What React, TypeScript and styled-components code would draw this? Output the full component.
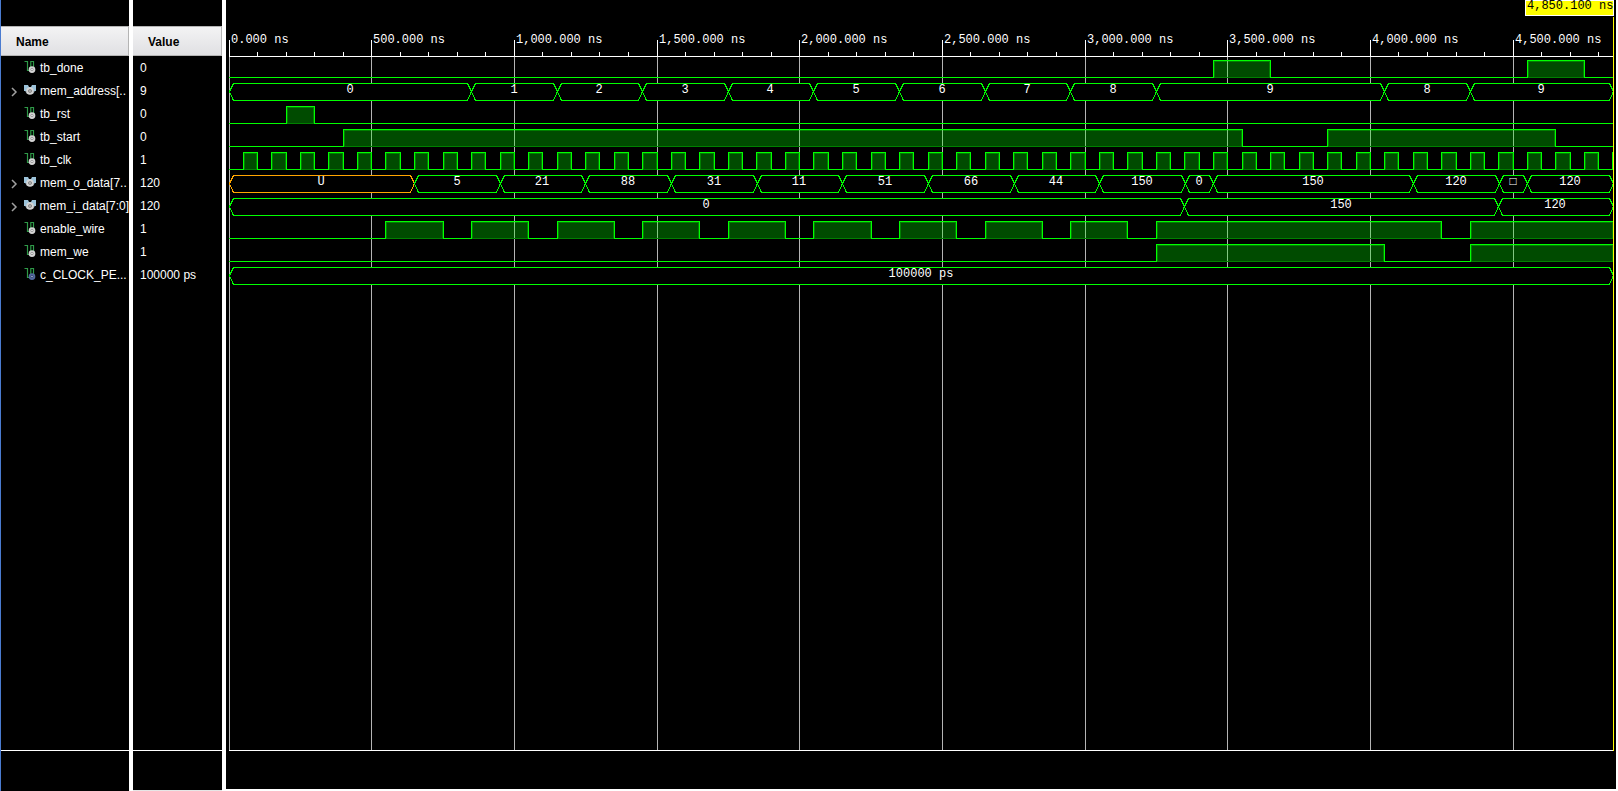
import React, { useLayoutEffect, useRef, useState } from "react";
import styled, { createGlobalStyle } from "styled-components";

const ROW = 23;
const END = 4850.1;
const GREEN = "#00ff00";

type Span = [number, number];
type BusPart = { until: number; text: string; unknown?: boolean };
type IconKind = "signal" | "bus" | "constant";
type Signal = {
  name: string;
  value: string;
  icon: IconKind;
  pulses?: Span[];
  bus?: BusPart[];
};

const steps = (texts: string[], first: number, step: number): BusPart[] =>
  texts.map((text, i) => ({ text, until: first + i * step }));

const pulseTrain = (count: number, first: number, period: number, high: number): Span[] =>
  Array.from({ length: count }, (_, i) => {
    const start = first + i * period;
    return [start, Math.min(start + high, END)];
  });

const signals: Signal[] = [
  { name: "tb_done", value: "0", icon: "signal", pulses: [[3450, 3650], [4550, 4750]] },
  {
    name: "mem_address[..", value: "9", icon: "bus",
    bus: [
      ...steps(["0", "1", "2", "3", "4", "5", "6", "7", "8"], 850, 300),
      { text: "9", until: 4050 }, { text: "8", until: 4350 }, { text: "9", until: END },
    ],
  },
  { name: "tb_rst", value: "0", icon: "signal", pulses: [[200, 300]] },
  { name: "tb_start", value: "0", icon: "signal", pulses: [[400, 3550], [3850, 4650]] },
  { name: "tb_clk", value: "1", icon: "signal", pulses: pulseTrain(49, 50, 100, 50) },
  {
    // The memory output settles 1 ns after the clock edge.
    name: "mem_o_data[7..", value: "120", icon: "bus",
    bus: [
      { text: "U", until: 651, unknown: true },
      ...steps(["5", "21", "88", "31", "11", "51", "66", "44", "150"], 951, 300),
      { text: "0", until: 3451 }, { text: "150", until: 4151 }, { text: "120", until: 4451 },
      { text: "□", until: 4551 }, { text: "120", until: END },
    ],
  },
  {
    name: "mem_i_data[7:0]", value: "120", icon: "bus",
    bus: [{ text: "0", until: 3350 }, { text: "150", until: 4450 }, { text: "120", until: END }],
  },
  {
    name: "enable_wire", value: "1", icon: "signal",
    pulses: [...pulseTrain(9, 550, 300, 200), [3250, 4250], [4350, END]],
  },
  { name: "mem_we", value: "1", icon: "signal", pulses: [[3250, 4050], [4350, END]] },
  { name: "c_CLOCK_PE...", value: "100000 ps", icon: "constant", bus: [{ text: "100000 ps", until: END }] },
];

const GlobalStyle = createGlobalStyle`
  body { margin: 0; background: #fff; }
  * { box-sizing: border-box; }
`;

const Viewer = styled.main`
  display: flex;
  gap: 4px;
  min-height: 100vh;
  border-left: 1px solid #4a7bd0;
  background: #fff;
  color: #fff;
  font: 12px/23px "Liberation Sans", Arial, sans-serif;
`;

const Column = styled.section<{ $width: number }>`
  display: flex;
  flex-direction: column;
  flex: none;
  width: ${(p) => p.$width}px;
  padding-top: 26px;
  background: #000;
  overflow: hidden;
`;

const Header = styled.h2`
  flex: none;
  height: 30px;
  margin: 0;
  padding-left: 15px;
  border: 1px solid #b4b4b4;
  border-width: 1px 1px 1px 0;
  background: linear-gradient(#f3f3f4, #e0e0e3);
  color: #000;
  font-size: 12px;
  line-height: 30px;
`;

const List = styled.ul`
  flex: 1;
  margin: 0;
  padding: 1px 0 0;
  list-style: none;
  border-bottom: 1px solid #fff;
`;

const Foot = styled.div<{ $edge?: boolean }>`
  flex: none;
  height: 40px;
  border-bottom: ${(p) => (p.$edge ? "1px solid #e6e6e6" : "0")};
`;

const NameRow = styled.li`
  display: flex;
  align-items: center;
  height: ${ROW}px;
  padding-left: 8px;
  white-space: nowrap;
`;

const ValueRow = styled.li`
  height: ${ROW}px;
  padding-left: 7px;
  white-space: nowrap;
`;

const Expander = styled.button`
  display: flex;
  align-items: center;
  width: 15px;
  height: 15px;
  padding: 0;
  border: 0;
  background: none;
`;

const Spacer = styled.span`
  width: 15px;
`;

const IconBox = styled.svg`
  flex: none;
  width: 12px;
  height: 15px;
  margin-right: 4px;
`;

const WavePanel = styled.section`
  flex: 1;
  min-width: 0;
  display: flex;
  margin: 0 2px 2px 0;
  background: #000;
`;

const Plot = styled.div`
  position: relative;
  flex: 1;
  min-width: 0;
`;

const Canvas = styled.svg`
  position: absolute;
  inset: 0;
  width: 100%;
  height: 100%;
  font: 12px "Liberation Mono", "Courier New", monospace;
  fill: #fff;
  shape-rendering: crispEdges;
`;

function SignalIcon({ kind }: { kind: IconKind }) {
  if (kind === "bus") {
    return (
      <IconBox viewBox="0 0 12 15" aria-hidden="true">
        <path d="M0 1h4l1 2h2l1-2h4v6H0z" fill="#9cc3da" />
        <path d="M1 7h10L9 10H3z" fill="#6f7f8a" />
        <circle cx="6" cy="7" r="2.800" fill="#666" stroke="#d4d4d4" strokeWidth="2" />
        <circle cx="6" cy="7" r="0.800" fill="#fff" />
      </IconBox>
    );
  }
  const constant = kind === "constant";
  return (
    <IconBox viewBox="0 0 12 15" aria-hidden="true">
      <path d="M0.500 0.500H3.500V9.500H6M6.800 8V0.500H9.500V7" fill="none" stroke="#2f9a48" strokeWidth="1.2" />
      <circle cx="8" cy="8.600" r="2.400" fill={constant ? "#25365f" : "#777"} stroke={constant ? "#52689c" : "#d4d4d4"} strokeWidth="1.900" />
      <circle cx="8" cy="8.600" r="0.800" fill={constant ? "#b8c4e0" : "#fff"} />
    </IconBox>
  );
}

function PulseWave({ spans, y, x }: { spans: Span[]; y: number; x: (t: number) => number }) {
  const high = y + 4;
  const low = y + 21;
  let line = `M${x(0)} ${low}.5`;
  spans.forEach(([a, b]) => {
    line += `H${x(a)}.5V${high}.5H${x(b)}.5`;
    if (b < END) line += `V${low}.5`;
  });
  if (spans[spans.length - 1][1] < END) line += `H${x(END)}`;
  return (
    <g>
      <path d={line} fill="none" stroke={GREEN} />
      {spans.map(([a, b]) => (
        <g key={a}>
          <rect x={x(a) + 1} y={high + 1} width={Math.max(0, x(b) - x(a) - 1)} height={17} fill="#008000" />
          <rect x={x(a) + 2} y={high + 2} width={Math.max(0, x(b) - x(a) - 3)} height={15} fill="#004b00" />
        </g>
      ))}
    </g>
  );
}

function BusWave({ parts, y, x }: { parts: BusPart[]; y: number; x: (t: number) => number }) {
  const top = y + 4;
  const low = y + 21;
  const mid = y + 12;
  return (
    <g>
      {parts.map((part, i) => {
        const a = x(i ? parts[i - 1].until : 0);
        const b = x(part.until);
        return (
          <g key={part.until}>
            <path
              d={`M${a}.5 ${mid}.5L${a + 4}.5 ${top}.5H${b - 4}.5L${b}.5 ${mid}.5L${b - 4}.5 ${low}.5H${a + 4}.5Z`}
              fill="#000"
              stroke={part.unknown ? "#ffa500" : GREEN}
            />
            <text
              x={Math.floor((a + b) / 2)}
              y={y + 14}
              textAnchor="middle"
              fontWeight={part.text === "□" ? 700 : 400}
            >
              {part.text}
            </text>
          </g>
        );
      })}
    </g>
  );
}

function Waveforms() {
  const ref = useRef<HTMLDivElement>(null);
  const [size, setSize] = useState({ width: 1390, height: 789 });
  useLayoutEffect(() => {
    const node = ref.current!;
    const measure = () => setSize({ width: node.clientWidth, height: node.clientHeight });
    measure();
    const observer = new ResizeObserver(measure);
    observer.observe(node);
    return () => observer.disconnect();
  }, []);

  const left = 3;
  const right = size.width - 3;
  const bottom = size.height - 39;
  const x = (t: number) => Math.floor(left + (t / END) * (right - left));
  const ticks = Array.from({ length: 49 }, (_, i) => i * 100);
  const majors = ticks.filter((t) => t % 500 === 0);

  return (
    <Plot ref={ref}>
      <Canvas role="img" aria-label="Simulation waveforms">
        {majors.map((t) => (
          <rect key={t} x={x(t)} y={57} width={1} height={bottom - 57} fill="#b4b4b4" />
        ))}
        {ticks.map((t) => {
          const y = t % 500 === 0 ? 40 : 52;
          return <rect key={t} x={x(t)} y={y} width={1} height={56 - y} />;
        })}
        {majors.map((t) => (
          <text key={t} x={x(t) + 2} y={43}>
            {t.toLocaleString("en-US", { minimumFractionDigits: 3 })} ns
          </text>
        ))}
        <rect x={left} y={56} width={right - left} height={1} />
        <rect x={left} y={bottom} width={right - left} height={1} />
        {signals.map((s, i) => {
          const y = 56 + i * ROW;
          return s.bus
            ? <BusWave key={s.name} parts={s.bus} y={y} x={x} />
            : <PulseWave key={s.name} spans={s.pulses!} y={y} x={x} />;
        })}
        {majors.slice(1).map((t) => (
          <g key={t}>
            {signals.map((s, i) =>
              s.pulses?.some(([a, b]) => a < t && t < b)
                ? <rect key={s.name} x={x(t)} y={61 + i * ROW} width={1} height={16} fill="#82c882" />
                : null,
            )}
          </g>
        ))}
        <rect x={right} y={17} width={1} height={bottom - 16} fill="#ffff00" />
        <rect x={right - 88} y={0} width={89} height={16} />
        <rect x={right - 87} y={1} width={87} height={14} fill="#ffff00" />
        <text x={right - 86} y={9} fill="#000">4,850.100 ns</text>
      </Canvas>
    </Plot>
  );
}

export default function App() {
  return (
    <>
      <GlobalStyle />
      <Viewer>
        <Column $width={128}>
          <Header>Name</Header>
          <List>
            {signals.map((s) => (
              <NameRow key={s.name}>
                {s.icon === "bus" ? (
                  <Expander type="button" aria-label={`Expand ${s.name}`}>
                    <svg width="10" height="12" viewBox="0 0 10 12" fill="none" stroke="#a0a0a0" strokeWidth="1.5">
                      <path d="M3 2l4 4-4 4" />
                    </svg>
                  </Expander>
                ) : <Spacer />}
                <SignalIcon kind={s.icon} />
                {s.name}
              </NameRow>
            ))}
          </List>
          <Foot />
        </Column>
        <Column $width={89}>
          <Header>Value</Header>
          <List>
            {signals.map((s) => <ValueRow key={s.name}>{s.value}</ValueRow>)}
          </List>
          <Foot $edge />
        </Column>
        <WavePanel>
          <Waveforms />
        </WavePanel>
      </Viewer>
    </>
  );
}
